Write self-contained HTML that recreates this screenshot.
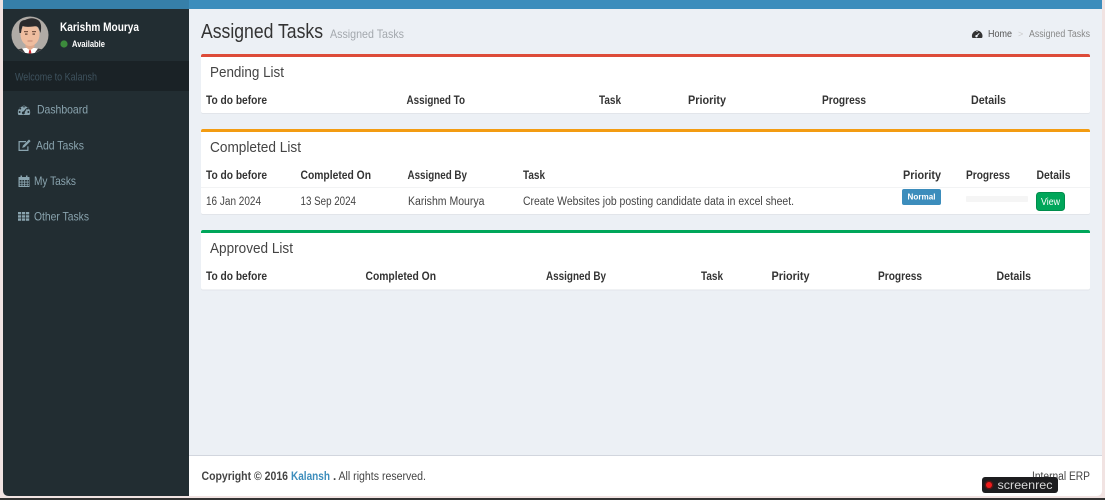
<!DOCTYPE html>
<html lang="en"><head><meta charset="utf-8"><title>Assigned Tasks</title>
<style>
html,body{margin:0;padding:0;width:1105px;height:500px;overflow:hidden;background:#f1e3e2}
svg{display:block;position:absolute;left:0;top:0;filter:blur(.25px)}
text{font-family:"Liberation Sans",sans-serif;white-space:pre}
.h{font-weight:700;font-size:11.500px;fill:#333}
.r{font-size:11.500px;fill:#444}
.t{font-size:14.500px;fill:#444}
.n{font-size:12px;fill:#8aa4af}
</style></head><body>
<svg width="1105" height="500" viewBox="0 0 1105 500" xmlns="http://www.w3.org/2000/svg">
<rect x="0" y="498" width="1105" height="2" fill="#333"/>
<rect x="3" y="0" width="1099" height="496" rx="5" fill="#ecf0f5"/>
<rect x="3" y="0" width="1099" height="9" fill="#3c8dbc"/>
<rect x="3" y="0" width="186" height="9" fill="#367fa9"/>
<path d="M3 9H189V496H9Q3 496 3 490Z" fill="#222d32"/>
<rect x="3" y="61" width="186" height="30" fill="#1a2226"/>

<!-- avatar -->
<circle cx="30" cy="35" r="18.500" fill="#b0aba6"/>
<clipPath id="av"><circle cx="30" cy="35" r="18.500"/></clipPath>
<g clip-path="url(#av)">
<path d="M15 54Q17 49 25 48H35Q43 49 45 54Z" fill="#fff"/>
<path d="M11 54Q13 50 22 48.500L26 54ZM49 54Q47 50 38 48.500L34 54Z" fill="#3a3a3c"/>
<path d="M29.200 50H30.800L31.500 54H28.500Z" fill="#d3262b"/>
<path d="M25.500 42H34.500V47L30 50.500L25.500 47Z" fill="#e0a98c"/>
<ellipse cx="30" cy="34.500" rx="9.500" ry="11.500" fill="#efbd9f"/>
<path d="M19.500 33Q17.500 20 25 20Q32 16.500 38 20Q42.500 23 40.500 33L39 29Q38 25.500 33 26.500Q26 27.500 22.500 26Q21.500 29 21 33Z" fill="#2b2a2c"/>
<rect x="24" y="31" width="4" height="1.200" fill="#7a5644"/><rect x="32" y="31" width="4" height="1.200" fill="#7a5644"/>
<rect x="25" y="33.500" width="2.500" height="1.200" fill="#5a4034"/><rect x="32.500" y="33.500" width="2.500" height="1.200" fill="#5a4034"/>
<path d="M27.500 41H32.500" stroke="#c28570" stroke-width=".9"/>
</g>
<text x="60" y="31" font-size="12" font-weight="700" fill="#fff" textLength="79" lengthAdjust="spacingAndGlyphs">Karishm Mourya</text>
<circle cx="64" cy="44" r="3.600" fill="#3c8b3c"/>
<text x="72" y="47" font-size="9.500" font-weight="700" fill="#fff" textLength="33" lengthAdjust="spacingAndGlyphs">Available</text>
<text x="15" y="80.500" font-size="11" fill="#3e525e" textLength="82" lengthAdjust="spacingAndGlyphs">Welcome to Kalansh</text>

<!-- sidebar icons -->
<g fill="#8aa4af">
<path fill-rule="evenodd" d="M18 114a6.200 6.200 0 1 1 12 0Q30 115 29 115H19Q18 115 18 114ZM24 105.500a1 1 0 1 0 .01 0ZM20.200 107.500a1 1 0 1 0 .01 0ZM27.800 107.500a1 1 0 1 0 .01 0ZM19.600 111a1 1 0 1 0 .01 0ZM28.400 111a1 1 0 1 0 .01 0ZM26.400 108L23.600 111.400a1.500 1.500 0 1 0 1.100.8L27 108.500Z"/>
<path d="M18.500 141h7.500v1.200h-6.300v7.600h7.600v-3.400h1.200v4.600H18.500Z"/>
<path d="M29 139.500l1.600 1.600-6 6-2.400.8.800-2.400Z"/>
<path fill-rule="evenodd" d="M18.500 177h2v-1.500h1.500v1.500h4v-1.500h1.500v1.500h2V187h-11ZM19.700 180v1.600h1.800V180ZM22.400 180v1.600h1.800V180ZM25.100 180v1.600h1.800V180ZM27.600 180v1.600h1.300V180ZM19.700 182.500v1.600h1.800v-1.600ZM22.400 182.500v1.600h1.800v-1.600ZM25.100 182.500v1.600h1.800v-1.600ZM27.600 182.500v1.600h1.300v-1.600ZM19.700 184.700v1.200h1.800v-1.200ZM22.400 184.700v1.200h1.800v-1.200ZM25.100 184.700v1.200h1.800v-1.200ZM27.600 184.700v1.200h1.300v-1.200Z"/>
<path d="M18 212h3.200v2.400H18ZM22 212h3.200v2.400H22ZM26 212h3.200v2.400H26ZM18 215.200h3.200v2.400H18ZM22 215.200h3.200v2.400H22ZM26 215.200h3.200v2.400H26ZM18 218.400h3.200v2.400H18ZM22 218.400h3.200v2.400H22ZM26 218.400h3.200v2.400H26Z"/>
</g>
<text class="n" x="37" y="113.500" textLength="51" lengthAdjust="spacingAndGlyphs">Dashboard</text>
<text class="n" x="36" y="149.500" textLength="48" lengthAdjust="spacingAndGlyphs">Add Tasks</text>
<text class="n" x="34" y="185" textLength="42" lengthAdjust="spacingAndGlyphs">My Tasks</text>
<text class="n" x="34" y="220.500" textLength="55" lengthAdjust="spacingAndGlyphs">Other Tasks</text>

<!-- header -->
<text x="201" y="38" font-size="20" fill="#333" textLength="122" lengthAdjust="spacingAndGlyphs">Assigned Tasks</text>
<text x="330" y="38" font-size="12" fill="#a3a8ad" textLength="74" lengthAdjust="spacingAndGlyphs">Assigned Tasks</text>
<path fill="#333" fill-rule="evenodd" d="M972 37a5.300 5.300 0 1 1 10.400 0Q982.400 38 981.400 38H973Q972 38 972 37ZM977 30a.9.9 0 1 0 .01 0ZM979 33l-2.200 2a1.200 1.200 0 1 0 .8.700L979.600 33.400Z"/>
<text x="988" y="37" font-size="10" fill="#555" textLength="24" lengthAdjust="spacingAndGlyphs">Home</text>
<text x="1018" y="37" font-size="9" fill="#ccc">&gt;</text>
<text x="1029" y="37" font-size="10" fill="#888" textLength="61" lengthAdjust="spacingAndGlyphs">Assigned Tasks</text>

<!-- pending -->
<rect x="201" y="55" width="889" height="59" rx="2" fill="#e2e5ea"/>
<rect x="201" y="54" width="889" height="59" rx="2" fill="#fff"/>
<path d="M201 57V56Q201 54 203 54H1088Q1090 54 1090 56V57Z" fill="#dd4b39"/>
<text class="t" x="210" y="77" textLength="74" lengthAdjust="spacingAndGlyphs">Pending List</text>
<text class="h" x="206" y="104" textLength="61" lengthAdjust="spacingAndGlyphs">To do before</text>
<text class="h" x="406.500" y="104" textLength="58.500" lengthAdjust="spacingAndGlyphs">Assigned To</text>
<text class="h" x="599" y="104" textLength="22" lengthAdjust="spacingAndGlyphs">Task</text>
<text class="h" x="688" y="104" textLength="38" lengthAdjust="spacingAndGlyphs">Priority</text>
<text class="h" x="822" y="104" textLength="44" lengthAdjust="spacingAndGlyphs">Progress</text>
<text class="h" x="971" y="104" textLength="35" lengthAdjust="spacingAndGlyphs">Details</text>

<!-- completed -->
<rect x="201" y="130" width="889" height="85" rx="2" fill="#e2e5ea"/>
<rect x="201" y="129" width="889" height="85" rx="2" fill="#fff"/>
<path d="M201 132V131Q201 129 203 129H1088Q1090 129 1090 131V132Z" fill="#f39c12"/>
<text class="t" x="210" y="152" textLength="91" lengthAdjust="spacingAndGlyphs">Completed List</text>
<text class="h" x="206" y="179" textLength="61" lengthAdjust="spacingAndGlyphs">To do before</text>
<text class="h" x="300.500" y="179" textLength="70.500" lengthAdjust="spacingAndGlyphs">Completed On</text>
<text class="h" x="407.500" y="179" textLength="59.500" lengthAdjust="spacingAndGlyphs">Assigned By</text>
<text class="h" x="523" y="179" textLength="22" lengthAdjust="spacingAndGlyphs">Task</text>
<text class="h" x="903" y="179" textLength="38" lengthAdjust="spacingAndGlyphs">Priority</text>
<text class="h" x="966" y="179" textLength="44" lengthAdjust="spacingAndGlyphs">Progress</text>
<text class="h" x="1036.500" y="179" textLength="34" lengthAdjust="spacingAndGlyphs">Details</text>
<rect x="201" y="187" width="889" height="1" fill="#f2f3f4"/>
<text class="r" x="206" y="205" textLength="55" lengthAdjust="spacingAndGlyphs">16 Jan 2024</text>
<text class="r" x="300.500" y="205" textLength="55.500" lengthAdjust="spacingAndGlyphs">13 Sep 2024</text>
<text class="r" x="408" y="205" textLength="76.500" lengthAdjust="spacingAndGlyphs">Karishm Mourya</text>
<text class="r" x="523" y="205" textLength="271" lengthAdjust="spacingAndGlyphs">Create Websites job posting candidate data in excel sheet.</text>
<rect x="902" y="189" width="39" height="16" rx="2" fill="#3c8dbc"/>
<text x="907.500" y="199.500" font-size="8.500" font-weight="700" fill="#fff" textLength="28" lengthAdjust="spacingAndGlyphs">Normal</text>
<rect x="966" y="196" width="62" height="6" rx="1" fill="#f5f5f5"/>
<rect x="1036.500" y="192.500" width="28" height="18" rx="3" fill="#00a65a" stroke="#008d4c"/>
<text x="1041" y="205" font-size="10.500" fill="#fff" textLength="19" lengthAdjust="spacingAndGlyphs">View</text>

<!-- approved -->
<rect x="201" y="231" width="889" height="59.500" rx="2" fill="#e2e5ea"/>
<rect x="201" y="230" width="889" height="59.500" rx="2" fill="#fff"/>
<path d="M201 233V232Q201 230 203 230H1088Q1090 230 1090 232V233Z" fill="#00a65a"/>
<text class="t" x="210" y="253" textLength="83" lengthAdjust="spacingAndGlyphs">Approved List</text>
<text class="h" x="206" y="280" textLength="61" lengthAdjust="spacingAndGlyphs">To do before</text>
<text class="h" x="365.500" y="280" textLength="70.500" lengthAdjust="spacingAndGlyphs">Completed On</text>
<text class="h" x="546" y="280" textLength="60" lengthAdjust="spacingAndGlyphs">Assigned By</text>
<text class="h" x="701" y="280" textLength="22" lengthAdjust="spacingAndGlyphs">Task</text>
<text class="h" x="771.500" y="280" textLength="38" lengthAdjust="spacingAndGlyphs">Priority</text>
<text class="h" x="878" y="280" textLength="44" lengthAdjust="spacingAndGlyphs">Progress</text>
<text class="h" x="996.500" y="280" textLength="34.500" lengthAdjust="spacingAndGlyphs">Details</text>

<!-- footer -->
<path d="M189 456H1102V490Q1102 496 1096 496H189Z" fill="#fff"/>
<rect x="189" y="455" width="913" height="1" fill="#d2d6de"/>
<text x="201.500" y="480" font-size="11.500" font-weight="700" fill="#444" textLength="86.500" lengthAdjust="spacingAndGlyphs">Copyright © 2016</text>
<text x="291" y="480" font-size="11.500" font-weight="700" fill="#3c8dbc" textLength="39" lengthAdjust="spacingAndGlyphs">Kalansh</text>
<text x="333" y="480" font-size="11.500" font-weight="700" fill="#444">.</text>
<text x="338.500" y="480" font-size="11.500" fill="#444" textLength="87.500" lengthAdjust="spacingAndGlyphs">All rights reserved.</text>
<text x="1032" y="480" font-size="11.500" fill="#444" textLength="58" lengthAdjust="spacingAndGlyphs">Internal ERP</text>

<!-- watermark -->
<rect x="982" y="477" width="76" height="16" rx="3" fill="#1d1d1f"/>
<circle cx="989" cy="485" r="4.500" fill="#5a1515"/>
<circle cx="989" cy="485" r="3" fill="#f01c1c"/>
<text x="997.500" y="489" font-size="11.500" fill="#d8d8d8" textLength="55" lengthAdjust="spacingAndGlyphs">screenrec</text>
</svg>
</body></html>
